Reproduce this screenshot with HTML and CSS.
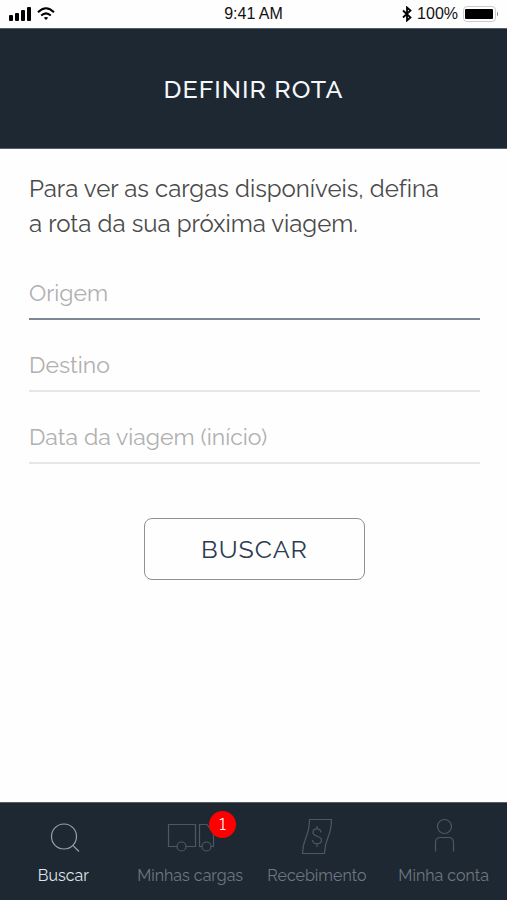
FILE: index.html
```html
<!DOCTYPE html>
<html lang="pt-BR">

<head>
  <meta charset="UTF-8" />
  <meta name="viewport" content="width=device-width, initial-scale=1.0" />
  <title>Definir rota</title>
  <link rel="stylesheet" href="styles.css">
</head>

<body>
  <div class="status-bar">
    <div class="status-left">
      <svg width="24" height="14" viewBox="0 0 24 14" fill="#000">
        <rect x="1" y="8" width="4" height="6" rx="1" />
        <rect x="7" y="6" width="4" height="8" rx="1" />
        <rect x="13" y="3" width="4" height="11" rx="1" />
        <rect x="19" y="0" width="4" height="14" rx="1" />
      </svg>
      <svg width="18" height="14" viewBox="0 0 18 14" fill="none" stroke="#000" stroke-width="2">
        <path d="M1 5.2 Q9 -2.6 17 5.2" />
        <path d="M4.2 8.6 Q9 4.2 13.8 8.6" />
        <path d="M9 13 L6.8 10.8 Q9 9.2 11.2 10.8 Z" fill="#000" stroke="none" />
      </svg>
    </div>
    <span class="status-time">9:41 AM</span>
    <div class="status-right">
      <svg width="10" height="16" viewBox="0 0 10 16" fill="none" stroke="#000" stroke-width="1.8">
        <path d="M1 4.5 L8.5 11.5 L5 14.5 V1.5 L8.5 4.5 L1 11.5" />
      </svg>
      <span class="battery-level">100%</span>
      <svg width="36" height="16" viewBox="0 0 36 16">
        <rect x="0.5" y="0.5" width="32" height="15" rx="3.5" fill="none" stroke="#ccc" />
        <rect x="2" y="3" width="28" height="10" rx="1" fill="#000" />
        <path d="M34 5.5 Q36 8 34 10.5 Z" fill="#777" />
      </svg>
    </div>
  </div>

  <header class="header">
    <h1>DEFINIR ROTA</h1>
  </header>

  <main class="content">
    <p class="intro">Para ver as cargas disponíveis, defina a rota da sua próxima viagem.</p>
    <form class="route-form" autocomplete="off">
      <input class="field active" type="text" name="origem" placeholder="Origem" aria-label="Origem" />
      <input class="field" type="text" name="destino" placeholder="Destino" aria-label="Destino" />
      <input class="field" type="text" name="data" placeholder="Data da viagem (início)" aria-label="Data da viagem (início)" />
      <button type="submit" class="search-btn">BUSCAR</button>
    </form>
  </main>

  <nav class="tab-bar">
    <a href="#buscar" class="tab selected">
      <svg class="tab-icon" viewBox="0 0 52 40">
        <circle cx="27" cy="19.5" r="12.5" />
        <path d="M35.8 28.3 L42 34.5" />
      </svg>
      <span>Buscar</span>
    </a>
    <a href="#cargas" class="tab">
      <div class="icon-wrap">
        <svg class="tab-icon" viewBox="0 0 52 40">
          <path d="M13 29.5 H4.5 V7.5 H31.5 V29.5 H22" />
          <circle cx="17.5" cy="29.5" r="4.5" />
          <path d="M38 29.5 H35.5 V7.5 H43 L49.5 16 V29.5 H47" />
          <circle cx="42.5" cy="29.5" r="4.5" />
        </svg>
        <span class="badge">1</span>
      </div>
      <span>Minhas cargas</span>
    </a>
    <a href="#recebimento" class="tab">
      <svg class="tab-icon" viewBox="0 0 52 40">
        <path d="M18.5 2.5 H40.5 C40.5 21 34 19 33.5 36.5 H11.5 C12 19 18.5 21 18.5 2.5 Z" />
        <path d="M30 15.5 C29.5 10.5 22 11 22 15.5 C22 20 30.5 18.5 30.5 23 C30.5 28 22 28 21.5 23 M26 9 V12 M26 26.5 V30" />
      </svg>
      <span>Recebimento</span>
    </a>
    <a href="#conta" class="tab">
      <svg class="tab-icon" viewBox="0 0 52 40">
        <circle cx="26.5" cy="9.5" r="7" />
        <path d="M17.5 34.5 V25.5 Q17.5 20.5 22.5 20.5 H30.5 Q35.5 20.5 35.5 25.5 V34.5" />
      </svg>
      <span>Minha conta</span>
    </a>
  </nav>
</body>

</html>
```

FILE: styles.css
```css
* {
  box-sizing: border-box;
  margin: 0;
  padding: 0;
}

body {
  font-family: Raleway, Lato, sans-serif;
  font-variant-ligatures: none;
  font-variant-numeric: lining-nums;
  background: #fefefe;
  color: #4a4a4a;
  display: flex;
  flex-direction: column;
  min-height: 100vh;
}

.status-bar {
  display: grid;
  grid-template-columns: 1fr auto 1fr;
  align-items: center;
  height: 28px;
  padding: 0 8px;
  font-family: "Liberation Sans", Arial, sans-serif;
  font-size: 16px;
  color: #111;
}

.status-left,
.status-right {
  display: flex;
  align-items: center;
  gap: 5px;
}

.status-right {
  justify-content: flex-end;
}

.header {
  display: flex;
  align-items: center;
  justify-content: center;
  height: 121px;
  background: #1e2832;
  border-top: 1px solid #53606a;
  border-bottom: 1px solid #53606a;
}

.header h1 {
  font-size: 25px;
  font-weight: 500;
  letter-spacing: 1px;
  color: #f4f8fc;
}

.content {
  flex: 1;
  padding: 22px 27px 0 29px;
}

.intro {
  font-size: 24px;
  line-height: 35px;
  padding-right: 32px;
}

.route-form {
  display: flex;
  flex-direction: column;
  align-items: center;
  margin-top: 26px;
}

.field {
  width: 100%;
  height: 53px;
  margin-bottom: 19px;
  border: none;
  border-bottom: 2px solid #e6e6e6;
  background: transparent;
  font-family: inherit;
  font-size: 23px;
  color: #4a4a4a;
  outline: none;
}

.field::placeholder {
  color: #b0b0b0;
  opacity: 1;
}

.field.active,
.field:focus {
  border-bottom-color: #7d8896;
}

.search-btn {
  width: 221px;
  height: 62px;
  margin-top: 35px;
  border: 1px solid #8c9299;
  border-radius: 8px;
  background: transparent;
  font-family: inherit;
  font-size: 25px;
  letter-spacing: 1px;
  color: #2c3b50;
  cursor: pointer;
}

.tab-bar {
  display: grid;
  grid-template-columns: repeat(4, 1fr);
  height: 98px;
  padding-top: 14px;
  background: #1e2832;
  border-top: 1px solid #53606a;
}

.tab {
  display: flex;
  flex-direction: column;
  align-items: center;
  gap: 8px;
  font-size: 16px;
  line-height: 22px;
  color: #6d7780;
  text-decoration: none;
}

.tab.selected {
  color: #dfe5ea;
}

.tab-icon {
  display: block;
  width: 52px;
  height: 40px;
  fill: none;
  stroke: #4c5963;
  stroke-width: 1.2;
}

.tab.selected .tab-icon {
  stroke: #98a2aa;
}

.icon-wrap {
  position: relative;
}

.badge {
  position: absolute;
  top: -6px;
  right: -20px;
  width: 27px;
  height: 27px;
  border-radius: 50%;
  background: #fe0000;
  color: #fff;
  line-height: 27px;
  text-align: center;
}
```
